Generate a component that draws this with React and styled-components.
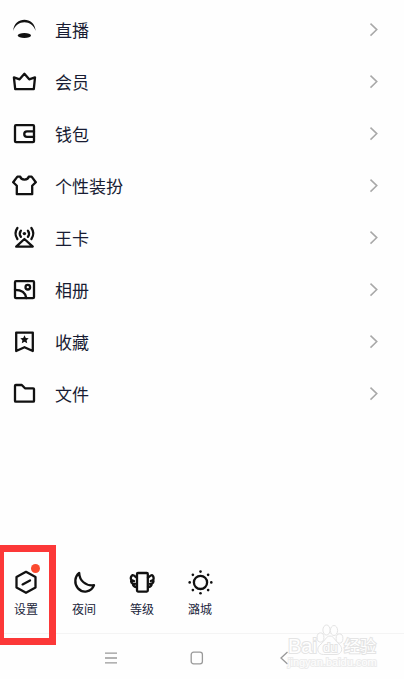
import React from 'react'
import styled, { createGlobalStyle } from 'styled-components'

const menu = [
    { name: '直播', icon: <LiveIcon /> },
    { name: '会员', icon: <CrownIcon /> },
    { name: '钱包', icon: <WalletIcon /> },
    { name: '个性装扮', icon: <ShirtIcon /> },
    { name: '王卡', icon: <AntennaIcon /> },
    { name: '相册', icon: <AlbumIcon /> },
    { name: '收藏', icon: <BookmarkIcon /> },
    { name: '文件', icon: <FolderIcon /> },
]

const tools = [
    { name: '设置', icon: <HexagonIcon />, dot: true, marked: true },
    { name: '夜间', icon: <MoonIcon /> },
    { name: '等级', icon: <TrophyIcon /> },
    { name: '潞城', icon: <SunIcon /> },
]

function App() {
    return (
        <>
            <GlobalStyle />
            <Page>
                <Menu>
                    {menu.map((item) => (
                        <li key={item.name}>
                            <MenuLink href='#'>
                                {item.icon}
                                <MenuName>{item.name}</MenuName>
                                <Chevron viewBox='0 0 10 16'>
                                    <path d='M1.5 1.6 L7.8 7.6 L1.5 13.6' />
                                </Chevron>
                            </MenuLink>
                        </li>
                    ))}
                </Menu>

                <Tools>
                    {tools.map((tool) => (
                        <Tool key={tool.name} type='button'>
                            {tool.icon}
                            {tool.name}
                            {tool.dot && <Dot />}
                            {tool.marked && <Mark />}
                        </Tool>
                    ))}
                </Tools>

                <SystemBar>
                    <SystemButton type='button' aria-label='菜单'>
                        <SystemIcon viewBox='0 0 16 16'>
                            <path d='M2 3.2 H14 M2 8 H14 M2 12.8 H14' />
                        </SystemIcon>
                    </SystemButton>
                    <SystemButton type='button' aria-label='主屏幕'>
                        <SystemIcon viewBox='0 0 16 16'>
                            <rect x='2.2' y='2.2' width='11.2' height='11.6' rx='2.4' />
                        </SystemIcon>
                    </SystemButton>
                    <SystemButton type='button' aria-label='返回'>
                        <SystemIcon viewBox='0 0 16 16'>
                            <path d='M11.5 2 L5 8 L11.5 14' />
                        </SystemIcon>
                    </SystemButton>
                    <Watermark viewBox='0 0 92 48'>
                        <ellipse cx='34.5' cy='14.5' rx='3.4' ry='4.6' />
                        <ellipse cx='40.5' cy='7' rx='3.6' ry='5' />
                        <ellipse cx='48' cy='7.5' rx='3.6' ry='5' />
                        <ellipse cx='53.5' cy='15.5' rx='3.4' ry='4.6' />
                        <path d='M44 13 C48 13 49 18 53 21 C58 25.5 55.5 31.5 50 31.5 H37.5 C31.5 31.5 29.5 25.5 35 21 C39 18 40 13 44 13 Z' />
                        <text className='bai' x='2' y='30'>Bai</text>
                        <text className='du' x='37' y='29'>du</text>
                        <text className='cn' x='58' y='29'>经验</text>
                        <text className='url' x='2' y='43'>jingyan.baidu.com</text>
                    </Watermark>
                </SystemBar>
            </Page>
        </>
    )
}

export default App

function LiveIcon() {
    return (
        <Icon viewBox='0 0 26 26'>
            <path className='fill' d='M2.2 14 C3 -0.9 23.8 -0.9 24.6 14 C21.6 2.2 5.2 2.2 2.2 14 Z' />
            <ellipse className='fill' cx='13.4' cy='18.5' rx='6.6' ry='2.4' />
        </Icon>
    )
}

function CrownIcon() {
    return (
        <Icon viewBox='0 0 26 26'>
            <path d='M2.9 8.4 L8.6 10.3 L13.4 4.8 L18.2 10.3 L24 8.4 L22.8 20.2 H4.2 Z' />
        </Icon>
    )
}

function WalletIcon() {
    return (
        <Icon viewBox='0 0 26 26'>
            <rect x='4' y='4.2' width='19' height='17' rx='1' />
            <path d='M23 10.3 H16 A2.7 2.7 0 0 0 16 15.8 H23' />
        </Icon>
    )
}

function ShirtIcon() {
    return (
        <Icon viewBox='0 0 26 26'>
            <path d='M9.2 3.6 C10 7.6 17 7.6 17.8 3.6 H20.6 L24.8 9.2 L21.2 12.8 V21.2 H5.8 V12.8 L2.2 9.2 L6.4 3.6 Z' />
        </Icon>
    )
}

function AntennaIcon() {
    return (
        <Icon viewBox='0 0 26 26'>
            <path d='M13.4 14 L5.2 21.6 H21.8 Z' />
            <circle className='fill' cx='13.4' cy='8.6' r='1.7' />
            <path d='M9.9 5.6 Q7.6 8.6 9.9 11.8 M16.9 5.6 Q19.2 8.6 16.9 11.8' />
            <path d='M6.4 3 Q2.6 8.4 6.4 14 M20.4 3 Q24.2 8.4 20.4 14' />
        </Icon>
    )
}

function AlbumIcon() {
    return (
        <Icon viewBox='0 0 26 26'>
            <rect x='4' y='4.2' width='19' height='17' rx='1' />
            <circle cx='16.8' cy='10.2' r='2.3' />
            <path d='M4 12.8 C10 12.8 14.5 15.5 15.3 21' />
        </Icon>
    )
}

function BookmarkIcon() {
    return (
        <Icon viewBox='0 0 26 26'>
            <path d='M5.2 3.6 H21.8 V22 L13.5 18.2 L5.2 22 Z' />
            <path
                className='fill'
                d='M13.5 6.2 L14.8 8.9 L17.7 9.2 L15.6 11.2 L16.2 14.2 L13.5 12.8 L10.8 14.2 L11.4 11.2 L9.3 9.2 L12.2 8.9 Z'
            />
        </Icon>
    )
}

function FolderIcon() {
    return (
        <Icon viewBox='0 0 26 26'>
            <path d='M4 4.8 Q4 4 4.8 4 H10.8 L14 7.3 H22.2 Q23 7.3 23 8.1 V19.9 Q23 20.7 22.2 20.7 H4.8 Q4 20.7 4 19.9 Z' />
        </Icon>
    )
}

function HexagonIcon() {
    return (
        <Icon viewBox='0 0 26 26'>
            <path d='M13 2.8 L22.5 8 V18.6 L13 23.8 L3.5 18.6 V8 Z' />
            <path d='M9.6 15.4 L17 11.4' />
        </Icon>
    )
}

function MoonIcon() {
    return (
        <Icon viewBox='0 0 26 26'>
            <path d='M8.2 4 C8.4 11.4 14.4 17.2 23 16.2 C20.2 23.2 11.8 24.6 7 19.4 C2.8 14.6 3.8 7.4 8.2 4 Z' />
        </Icon>
    )
}

function TrophyIcon() {
    return (
        <Icon viewBox='0 0 26 26'>
            <rect x='8' y='4' width='10.8' height='18.6' rx='1' />
            <path d='M7.8 8.6 C6.6 8.2 5 5.6 3.4 6.2 C1.6 7.6 1.6 9.6 2.4 11 C1.8 12.6 2.6 14 3.8 14.6 C4 16.6 5.4 18 7.8 18 M2.4 11 L5 12 M3.8 14.6 L6 14.8' />
            <path d='M19 8.6 C20.2 8.2 21.8 5.6 23.2 6.2 C24.8 7.6 24.8 9.6 24.2 11 C24.8 12.6 24 14 22.8 14.6 C22.6 16.6 21.2 18 19 18 M24.2 11 L21.8 12 M22.8 14.6 L21 14.8' />
        </Icon>
    )
}

function SunIcon() {
    const rays = [0, 45, 90, 135, 180, 225, 270, 315]
    return (
        <Icon viewBox='0 0 26 26'>
            <circle cx='13.5' cy='13.4' r='6.6' />
            {rays.map((deg) => (
                <circle
                    key={deg}
                    className='fill'
                    cx='13.5'
                    cy='2.6'
                    r='1.3'
                    transform={`rotate(${deg} 13.5 13.4)`}
                />
            ))}
        </Icon>
    )
}

const GlobalStyle = createGlobalStyle`
    * {
        box-sizing: border-box;
    }

    body {
        margin: 0;
        background: #fefefe;
        font-family: 'Noto Sans CJK SC', sans-serif;
    }
`

const Page = styled.div`
    min-height: 100vh;
    display: flex;
    flex-direction: column;
`

const Menu = styled.ul`
    list-style: none;
    margin: 0;
    padding: 4px 0 0;
`

const MenuLink = styled.a`
    height: 52px;
    padding: 0 25px 0 11px;
    display: flex;
    align-items: center;
    gap: 18px;
    color: #181c33;
    text-decoration: none;
`

const MenuName = styled.span`
    flex: 1;
    font-size: 17px;
    line-height: 24px;
`

const Icon = styled.svg`
    flex: none;
    width: 26px;
    height: 26px;
    fill: none;
    stroke: #111;
    stroke-width: 2.3;
    stroke-linejoin: round;
    stroke-linecap: round;

    .fill {
        fill: #111;
        stroke: none;
    }
`

const Chevron = styled.svg`
    width: 10px;
    height: 16px;
    fill: none;
    stroke: #a8a8a8;
    stroke-width: 1.5;
`

const Tools = styled.div`
    margin-top: auto;
    padding-bottom: 15px;
    display: flex;
    gap: 6px;
`

const Tool = styled.button`
    position: relative;
    width: 52px;
    padding: 0;
    border: 0;
    background: none;
    display: flex;
    flex-direction: column;
    align-items: center;
    gap: 5px;
    font-family: inherit;
    font-size: 12px;
    line-height: 18px;
    color: #20243a;
`

const Dot = styled.span`
    position: absolute;
    top: -5px;
    right: 12px;
    width: 9px;
    height: 9px;
    border-radius: 50%;
    background: #fb4a2f;
`

const Mark = styled.span`
    position: absolute;
    z-index: 1;
    top: -24px;
    left: 0;
    width: 56px;
    height: 100px;
    border: 7px solid #fc3838;
    border-left-width: 4px;
`

const SystemBar = styled.nav`
    position: relative;
    height: 46px;
    padding: 2px 77px 0 68px;
    border-top: 1px solid #f4f4f4;
    display: grid;
    grid-template-columns: repeat(3, 1fr);
    align-items: center;
    justify-items: center;
`

const SystemButton = styled.button`
    width: 24px;
    height: 24px;
    padding: 0;
    border: 0;
    background: none;
    display: flex;
    align-items: center;
    justify-content: center;
`

const SystemIcon = styled.svg`
    width: 16px;
    height: 16px;
    fill: none;
    stroke: #999;
    stroke-width: 1.3;
`

const Watermark = styled.svg`
    position: absolute;
    right: 26px;
    bottom: 8px;
    width: 92px;
    height: 48px;
    fill: #fefefe;
    stroke: #e4e4e4;
    stroke-width: 1;
    pointer-events: none;

    text {
        font-family: 'Liberation Sans', 'Noto Sans CJK SC', sans-serif;
        stroke-width: 2;
        paint-order: stroke;
    }

    .bai {
        font-size: 20px;
    }

    .du {
        font-size: 13px;
    }

    .cn {
        font-size: 16px;
    }

    .url {
        font-size: 11px;
        stroke: #ececec;
    }
`
